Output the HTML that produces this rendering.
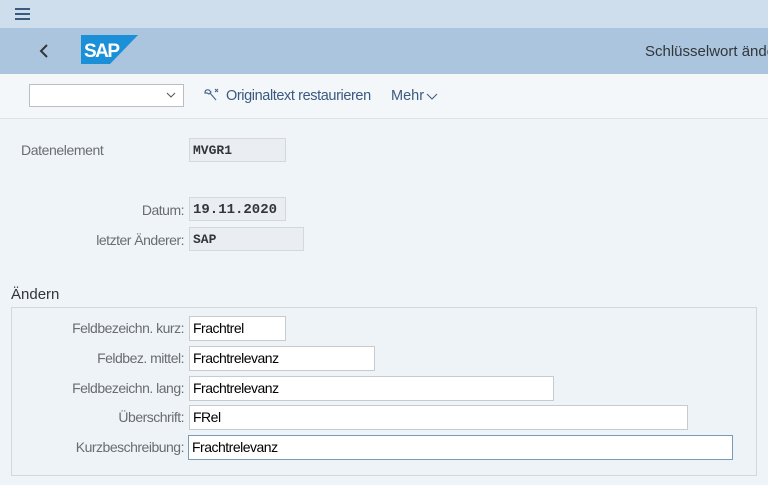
<!DOCTYPE html>
<html><head><meta charset="utf-8"><style>
*{margin:0;padding:0;box-sizing:border-box}
body{width:768px;height:485px;overflow:hidden;background:#eff4f9;font-family:"Liberation Sans",sans-serif;position:relative;color:#32363a}
.a{position:absolute;white-space:nowrap}
.lbl{position:absolute;font-size:14px;color:#6a6d70;text-align:right;width:184px;left:0;letter-spacing:-0.5px;white-space:nowrap}
.ro{position:absolute;background:#eaeef2;border:1px solid #d3d8dd;font-family:"Liberation Mono",monospace;font-size:13px;padding:4px 3px;color:#32363a;font-weight:bold}
.in{position:absolute;background:#fff;border:1px solid #c6cbd0;font-size:14px;padding:3px 3px;color:#000;letter-spacing:-0.5px;height:25px}
</style></head><body>
<div class="a" style="left:0;top:0;width:768px;height:28px;background:#cfdeec"></div>
<div class="a" style="left:15px;top:8px;width:15px;height:2px;background:#3a5a80;box-shadow:0 5px 0 #3a5a80,0 10px 0 #3a5a80"></div>
<div class="a" style="left:0;top:28px;width:768px;height:46px;background:#aac5dd"></div>
<svg class="a" style="left:38px;top:43px" width="12" height="16"><path d="M9 2 L3 8 L9 14" stroke="#32363a" stroke-width="2" fill="none"/></svg>
<svg class="a" style="left:81px;top:35px" width="57" height="29"><polygon points="0,0 57,0 29,29 0,29" fill="#1b8fd8"/><text x="3" y="22" font-family="Liberation Sans" font-weight="bold" font-size="19" fill="#fff" letter-spacing="-1.5">SAP</text></svg>
<div class="a" style="left:645px;top:43px;font-size:15px;color:#32363a">Schlüsselwort ände</div>
<div class="a" style="left:0;top:74px;width:768px;height:45px;background:#f4f7fa;border-bottom:1px solid #dde3e8"></div>
<div class="a" style="left:29px;top:84px;width:155px;height:23px;background:#fff;border:1px solid #b8bec4"></div>
<svg class="a" style="left:166px;top:92px" width="10" height="7"><path d="M1 1 L5 5 L9 1" stroke="#555" fill="none"/></svg>
<svg class="a" style="left:203px;top:87px" width="16" height="16"><path d="M2 6 Q2 2 6 3 L8 5 L6 7 L4 6 Z M7 6 L13 13 M12 2 L15 5 M15 2 L12 5" stroke="#4a6a90" stroke-width="1.2" fill="none"/></svg>
<div class="a" style="left:226px;top:88px;font-size:14.5px;color:#3a5a80;letter-spacing:-0.4px">Originaltext restaurieren</div>
<div class="a" style="left:391px;top:88px;font-size:14.5px;color:#3a5a80">Mehr</div>
<svg class="a" style="left:426px;top:93px" width="12" height="8"><path d="M1 1 L6 6 L11 1" stroke="#3a5a80" fill="none"/></svg>
<div class="a" style="left:21px;top:142px;font-size:14px;color:#6a6d70;letter-spacing:-0.4px">Datenelement</div>
<div class="ro" style="left:189px;top:138px;width:97px;height:24px">MVGR1</div>
<div class="lbl" style="top:202px">Datum:</div>
<div class="ro" style="left:189px;top:197px;width:97px;height:24px;font-size:14px">19.11.2020</div>
<div class="lbl" style="top:232px">letzter Änderer:</div>
<div class="ro" style="left:189px;top:227px;width:115px;height:24px">SAP</div>
<div class="a" style="left:11px;top:286px;font-size:15px;color:#32363a">Ändern</div>
<div class="a" style="left:11px;top:307px;width:746px;height:169px;border:1px solid #d3d8dd;background:#eef3f8"></div>
<div class="lbl" style="top:320px">Feldbezeichn. kurz:</div>
<div class="in" style="left:189px;top:316px;width:97px">Frachtrel</div>
<div class="lbl" style="top:350px">Feldbez. mittel:</div>
<div class="in" style="left:189px;top:346px;width:186px">Frachtrelevanz</div>
<div class="lbl" style="top:380px">Feldbezeichn. lang:</div>
<div class="in" style="left:189px;top:376px;width:365px">Frachtrelevanz</div>
<div class="lbl" style="top:409px">Überschrift:</div>
<div class="in" style="left:189px;top:405px;width:499px">FRel</div>
<div class="lbl" style="top:439px">Kurzbeschreibung:</div>
<div class="in" style="left:188px;top:435px;width:545px;border-color:#7a9ab8">Frachtrelevanz</div>
</body></html>
